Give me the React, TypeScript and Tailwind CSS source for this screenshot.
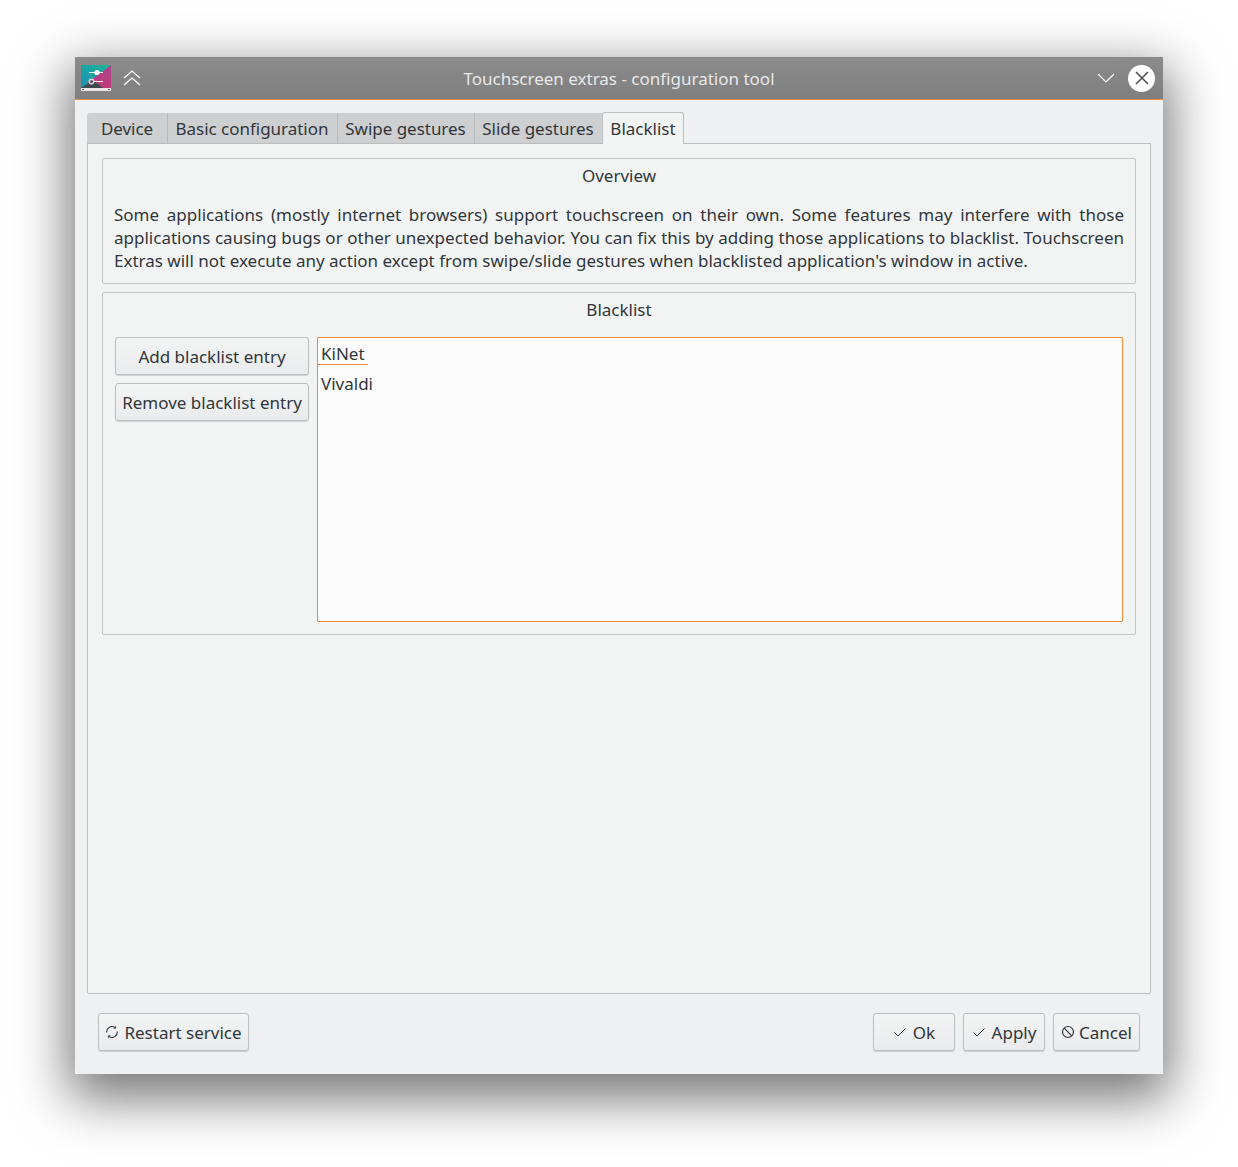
import React from 'react';

const AppIcon = () => (
  <svg width="30" height="26" viewBox="0 0 30 26" className="block">
    <defs>
      <linearGradient id="tealGrad" x1="0" y1="1" x2="1" y2="0">
        <stop offset="0" stopColor="#1f8fb5" />
        <stop offset="1" stopColor="#18b896" />
      </linearGradient>
      <linearGradient id="pinkGrad" x1="0" y1="0" x2="0" y2="1">
        <stop offset="0" stopColor="#a8468f" />
        <stop offset="1" stopColor="#c23a78" />
      </linearGradient>
    </defs>
    <rect x="0" y="0" width="30" height="23" fill="url(#tealGrad)" />
    <polygon points="30,0 30,23 14,23 6,18" fill="url(#pinkGrad)" />
    <polygon points="0,23 12,15 22,23" fill="#3f4a4d" />
    <rect x="0" y="23" width="30" height="3" fill="#e8e4e8" />
    <rect x="1" y="24" width="2" height="1" fill="#555" />
    <rect x="27" y="24" width="2" height="1" fill="#555" />
    <rect x="8" y="7" width="14" height="1" fill="#fff" />
    <circle cx="16" cy="7.5" r="2.6" fill="#fff" />
    <rect x="12" y="16" width="10" height="1" fill="#fff" />
    <circle cx="10.5" cy="16.5" r="2.2" fill="none" stroke="#d8d8d8" strokeWidth="1.4" />
  </svg>
);

const CheckIcon = () => (
  <svg width="14" height="14" viewBox="0 0 14 14" className="block">
    <path d="M1.5 7.5 L5 11 L12.5 3.5" fill="none" stroke="#31363b" strokeWidth="1" />
  </svg>
);

const CancelIcon = () => (
  <svg width="14" height="14" viewBox="0 0 14 14" className="block">
    <circle cx="7" cy="7" r="5.5" fill="none" stroke="#31363b" strokeWidth="1.2" />
    <path d="M3.2 3.2 L10.8 10.8" stroke="#31363b" strokeWidth="1.2" />
  </svg>
);

const RestartIcon = () => (
  <svg width="14" height="14" viewBox="0 0 14 14" className="block">
    <path d="M1.8 7.5 A5.2 5.2 0 0 1 10 2.6" fill="none" stroke="#31363b" strokeWidth="1.1" />
    <path d="M12.2 6.5 A5.2 5.2 0 0 1 4 11.4" fill="none" stroke="#31363b" strokeWidth="1.1" />
    <path d="M10.6 1.4 L10.6 3.2 L8.8 3.2" fill="none" stroke="#31363b" strokeWidth="1" />
    <path d="M3.4 12.6 L3.4 10.8 L5.2 10.8" fill="none" stroke="#31363b" strokeWidth="1" />
  </svg>
);

const Button = ({ className, children }: { className: string; children: React.ReactNode }) => (
  <button className={`h-[38px] flex items-center justify-center rounded-[3px] border border-[#bcbebf] bg-gradient-to-b from-[#f3f4f4] to-[#eaebec] shadow-[0_1px_1px_rgba(0,0,0,0.15)] text-[#31363b] whitespace-nowrap ${className}`}>
    {children}
  </button>
);

const tabs = [
  { label: 'Device', width: 'w-[81px]' },
  { label: 'Basic configuration', width: 'w-[170px]' },
  { label: 'Swipe gestures', width: 'w-[137px]' },
  { label: 'Slide gestures', width: 'w-[128px]' },
];

export default function App() {
  return (
    <div className="w-[1238px] h-[1167px] bg-white pt-[57px] pl-[75px] font-['Noto_Sans',sans-serif] text-[17px] leading-[23px] text-[#31363b] overflow-hidden">
      <div className="w-[1088px] h-[1017px] flex flex-col bg-[#eff0f1] shadow-[0_18px_50px_6px_rgba(0,0,0,0.55)]">
        {/* title bar */}
        <div className="h-[43px] shrink-0 flex items-center pl-[6px] pr-[8px] bg-gradient-to-b from-[#8b8b8b] to-[#7f7f7f] border-b border-[#f08a3c]">
          <AppIcon />
          <svg width="18" height="16" viewBox="0 0 18 16" className="ml-[12px]">
            <path d="M1 8 L9 1 L17 8 M1 15 L9 8 L17 15" fill="none" stroke="#fff" strokeWidth="1.2" />
          </svg>
          <div className="flex-1 text-center text-[#e8e8e8]">Touchscreen extras - configuration tool</div>
          <svg width="18" height="10" viewBox="0 0 18 10" className="mr-[13px]">
            <path d="M1 1 L9 9 L17 1" fill="none" stroke="#fff" strokeWidth="1.2" />
          </svg>
          <div className="w-[27px] h-[27px] rounded-full bg-white flex items-center justify-center">
            <svg width="14" height="14" viewBox="0 0 14 14">
              <path d="M1 1 L13 13 M13 1 L1 13" stroke="#4d4d4d" strokeWidth="1.5" />
            </svg>
          </div>
        </div>

        <div className="flex-1 flex flex-col px-[12px] pt-[12px]">
          {/* tabs */}
          <div className="flex h-[32px] shrink-0 relative z-10">
            {tabs.map((tab, i) => (
              <div key={tab.label} className={`${tab.width} ${i === 0 ? 'rounded-tl-[3px]' : 'pr-[1px]'} h-[31px] mt-[1px] flex items-center justify-center bg-[#cdcfd1] border-r border-[#b9bbbc] border-b tracking-[-0.03px]`}>
                {tab.label}
              </div>
            ))}
            <div className="w-[82px] h-[32px] flex items-center justify-center bg-[#f2f4f4] border border-[#bcbebf] border-b-0 rounded-t-[3px] -ml-px">
              Blacklist
            </div>
          </div>

          {/* tab pane */}
          <div className="h-[851px] -mt-px flex flex-col gap-[8px] border border-[#bcbebf] bg-[#f2f4f4] rounded-b-[2px] px-[14px] pt-[14px]">
            <div className="h-[126px] border border-[#c4c6c7] rounded-[2px] px-[11px] pt-[5px]">
              <div className="text-center">Overview</div>
              <p className="mt-[16px] text-justify">
                Some applications (mostly internet browsers) support touchscreen on their own. Some features may interfere with those applications causing bugs or other unexpected behavior. You can fix this by adding those applications to blacklist. Touchscreen Extras will not execute any action except from swipe/slide gestures when blacklisted application's window in active.
              </p>
            </div>

            <div className="h-[343px] border border-[#c4c6c7] rounded-[2px] px-[12px] pt-[5px]">
              <div className="text-center">Blacklist</div>
              <div className="flex gap-[8px] mt-[16px]">
                <div className="w-[194px] flex flex-col gap-[8px]">
                  <Button className="w-full">Add blacklist entry</Button>
                  <Button className="w-full">Remove blacklist entry</Button>
                </div>
                <div className="w-[806px] h-[285px] border border-[#f08a3c] rounded-[1px] bg-[#fcfcfc] flex flex-col items-start">
                  <div className="w-[50px] h-[27px] pl-[3px] pt-[4px] border-b border-[#f08a3c]">KiNet</div>
                  <div className="pl-[3px] pt-[7px]">Vivaldi</div>
                </div>
              </div>
            </div>
          </div>

          {/* footer */}
          <div className="flex items-center mt-[19px] pl-[11px] pr-[11px]">
            <Button className="w-[151px] gap-[5px]"><RestartIcon />Restart service</Button>
            <div className="flex-1" />
            <div className="flex gap-[8px]">
              <Button className="w-[82px] gap-[6px]"><CheckIcon />Ok</Button>
              <Button className="w-[82px] gap-[6px]"><CheckIcon />Apply</Button>
              <Button className="w-[87px] gap-[4px]"><CancelIcon />Cancel</Button>
            </div>
          </div>
        </div>
      </div>
    </div>
  );
}
